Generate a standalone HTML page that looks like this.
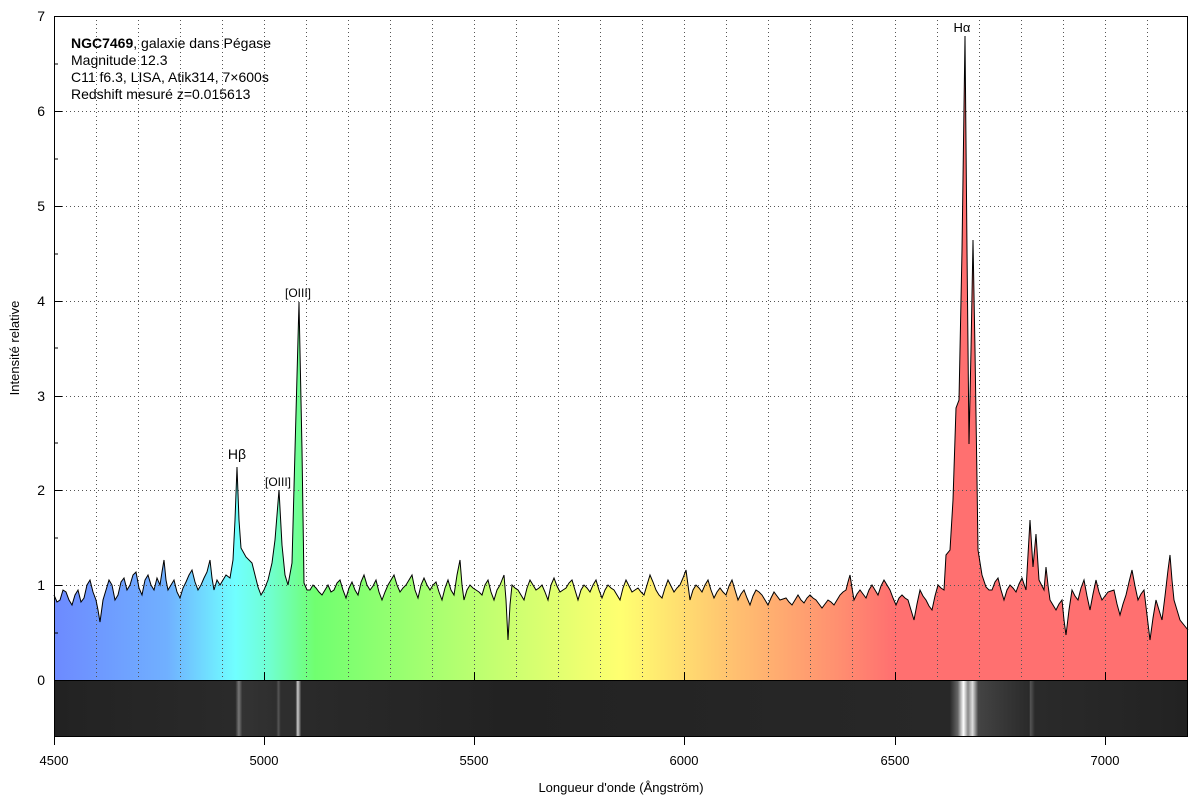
<!DOCTYPE html>
<html><head><meta charset="utf-8"><style>
body{margin:0;background:#fff;}
svg{display:block;font-family:"Liberation Sans",sans-serif;}
</style></head><body>
<svg width="1200" height="800" viewBox="0 0 1200 800">
<defs>
<linearGradient id="sp" x1="54" y1="0" x2="1188" y2="0" gradientUnits="userSpaceOnUse">
<stop offset="0" stop-color="#6d8aff"/>
<stop offset="0.1" stop-color="#70b0ff"/>
<stop offset="0.16" stop-color="#70ffff"/>
<stop offset="0.19" stop-color="#70ffd0"/>
<stop offset="0.23" stop-color="#70ff70"/>
<stop offset="0.5" stop-color="#ffff70"/>
<stop offset="0.6" stop-color="#ffc070"/>
<stop offset="0.69" stop-color="#ff9070"/>
<stop offset="0.74" stop-color="#ff7070"/>
<stop offset="1" stop-color="#ff7070"/>
</linearGradient>
<linearGradient id="st" x1="54" y1="0" x2="1188" y2="0" gradientUnits="userSpaceOnUse">
<stop offset="0" stop-color="#222"/>
<stop offset="0.160" stop-color="#2a2a2a"/>
<stop offset="0.163" stop-color="#777"/>
<stop offset="0.166" stop-color="#333"/>
<stop offset="0.196" stop-color="#2e2e2e"/>
<stop offset="0.198" stop-color="#555"/>
<stop offset="0.200" stop-color="#2e2e2e"/>
<stop offset="0.213" stop-color="#2e2e2e"/>
<stop offset="0.215" stop-color="#ccc"/>
<stop offset="0.218" stop-color="#2a2a2a"/>
<stop offset="0.40" stop-color="#222"/>
<stop offset="0.79" stop-color="#282828"/>
<stop offset="0.797" stop-color="#666"/>
<stop offset="0.802" stop-color="#fff"/>
<stop offset="0.806" stop-color="#888"/>
<stop offset="0.810" stop-color="#ddd"/>
<stop offset="0.815" stop-color="#444"/>
<stop offset="0.86" stop-color="#2a2a2a"/>
<stop offset="0.861" stop-color="#555"/>
<stop offset="0.865" stop-color="#2a2a2a"/>
<stop offset="1" stop-color="#222"/>
</linearGradient>
</defs>
<rect x="54" y="680" width="1134" height="57" fill="url(#st)"/>
<polygon fill="url(#sp)" points="54,680 54,595 57,602 60,600 63,590 66,592 69,600 72,605 75,595 78,590 81,602 84,598 87,585 90,580 93,592 96,600 98,610 100,622 103,600 106,590 109,580 112,585 115,600 118,595 121,582 124,578 127,590 130,585 133,575 136,572 139,588 142,595 145,580 148,575 151,585 154,590 157,578 160,585 162,572 164,560 166,580 168,590 171,585 174,580 177,592 180,598 183,588 186,582 189,575 192,570 195,582 198,590 201,585 204,578 207,572 210,560 212,578 214,590 217,580 220,585 223,580 226,575 230,578 233,560 235,520 237,467 239,520 241,548 246,557 252,563 255,575 258,587 261,595 264,590 268,580 272,563 275,540 279,490 282,545 285,575 288,585 292,563 295,450 299,302 302,450 304,583 307,590 310,590 313,585 316,588 319,592 322,595 325,590 328,585 331,592 334,590 337,583 340,580 343,590 346,598 349,588 352,582 355,590 358,595 361,582 364,575 367,585 370,590 373,586 376,580 379,592 382,600 385,592 388,585 391,580 394,575 397,585 400,592 403,588 406,585 409,580 412,575 415,590 418,598 421,585 424,578 427,585 430,590 433,585 436,582 439,592 442,600 445,588 448,580 451,590 454,595 457,575 460,560 462,585 464,600 467,590 470,585 473,588 476,590 479,592 482,595 485,585 488,580 491,592 494,600 497,590 500,585 502,580 504,575 506,600 508,640 510,605 512,585 515,588 518,590 521,595 524,600 527,588 530,580 533,585 536,590 539,588 542,585 545,592 548,600 551,585 554,578 557,586 560,592 563,590 566,588 569,583 572,580 575,590 578,600 581,590 584,585 587,588 590,592 593,585 596,580 599,590 602,598 605,590 608,585 611,588 614,590 617,595 620,600 623,588 626,580 629,586 632,592 635,590 638,588 641,592 644,595 647,585 650,575 653,582 656,590 659,595 662,598 665,588 668,580 671,586 674,592 677,588 680,585 683,578 686,570 688,585 690,600 693,590 696,585 699,588 702,592 705,585 708,580 711,590 714,598 717,592 720,588 723,592 726,595 729,586 732,580 735,590 738,600 741,594 744,590 747,598 750,605 753,596 756,590 759,592 762,595 765,600 768,605 771,598 774,592 777,596 780,600 783,599 786,598 789,602 792,605 795,600 798,595 801,600 804,603 807,598 810,595 813,598 816,600 819,604 822,608 825,604 828,600 831,602 834,605 837,600 840,595 843,592 846,590 848,582 850,575 852,588 854,600 857,594 860,590 863,594 866,598 869,590 872,585 875,590 878,595 881,586 884,580 887,585 890,590 893,598 896,605 899,598 902,595 905,598 908,600 911,610 914,620 917,604 920,590 923,596 926,600 929,606 932,610 935,596 938,585 941,588 944,590 946,555 950,550 953,500 956,408 959,400 962,250 965,36 967,250 969,444 971,350 973,240 975,350 977,480 978,550 982,575 986,587 989,590 992,590 995,582 998,578 1001,590 1004,600 1007,590 1010,585 1013,588 1016,592 1019,584 1022,578 1026,590 1030,520 1033,567 1036,534 1039,580 1044,590 1046,567 1048,585 1050,600 1053,605 1056,610 1059,604 1062,600 1064,620 1066,635 1069,610 1072,590 1075,596 1078,600 1081,588 1084,580 1087,596 1090,610 1093,594 1096,580 1099,592 1102,600 1105,596 1108,592 1111,591 1114,590 1117,604 1120,615 1123,604 1126,595 1129,582 1132,570 1135,586 1138,600 1141,594 1144,590 1147,615 1150,640 1153,618 1156,600 1159,610 1162,620 1165,596 1168,570 1170,555 1172,580 1174,600 1177,610 1180,620 1184,625 1188,630 1188,680"/>
<g stroke="#555" stroke-width="1" stroke-dasharray="1,3" fill="none">
<path d="M54 585.5H1188M54 490.5H1188M54 396.5H1188M54 301.5H1188M54 206.5H1188M54 111.5H1188"/>
<path d="M96.5 16V680M138.5 16V680M180.5 16V680M222.5 16V680M264.5 16V680M306.5 16V680M348.5 16V680M390.5 16V680M432.5 16V680M474.5 16V680M516.5 16V680M558.5 16V680M600.5 16V680M642.5 16V680M684.5 16V680M726.5 16V680M768.5 16V680M810.5 16V680M852.5 16V680M895.5 16V680M937.5 16V680M979.5 16V680M1021.5 16V680M1063.5 16V680M1105.5 16V680M1147.5 16V680"/>
</g>
<polyline fill="none" stroke="#000" stroke-width="1" points="54,595 57,602 60,600 63,590 66,592 69,600 72,605 75,595 78,590 81,602 84,598 87,585 90,580 93,592 96,600 98,610 100,622 103,600 106,590 109,580 112,585 115,600 118,595 121,582 124,578 127,590 130,585 133,575 136,572 139,588 142,595 145,580 148,575 151,585 154,590 157,578 160,585 162,572 164,560 166,580 168,590 171,585 174,580 177,592 180,598 183,588 186,582 189,575 192,570 195,582 198,590 201,585 204,578 207,572 210,560 212,578 214,590 217,580 220,585 223,580 226,575 230,578 233,560 235,520 237,467 239,520 241,548 246,557 252,563 255,575 258,587 261,595 264,590 268,580 272,563 275,540 279,490 282,545 285,575 288,585 292,563 295,450 299,302 302,450 304,583 307,590 310,590 313,585 316,588 319,592 322,595 325,590 328,585 331,592 334,590 337,583 340,580 343,590 346,598 349,588 352,582 355,590 358,595 361,582 364,575 367,585 370,590 373,586 376,580 379,592 382,600 385,592 388,585 391,580 394,575 397,585 400,592 403,588 406,585 409,580 412,575 415,590 418,598 421,585 424,578 427,585 430,590 433,585 436,582 439,592 442,600 445,588 448,580 451,590 454,595 457,575 460,560 462,585 464,600 467,590 470,585 473,588 476,590 479,592 482,595 485,585 488,580 491,592 494,600 497,590 500,585 502,580 504,575 506,600 508,640 510,605 512,585 515,588 518,590 521,595 524,600 527,588 530,580 533,585 536,590 539,588 542,585 545,592 548,600 551,585 554,578 557,586 560,592 563,590 566,588 569,583 572,580 575,590 578,600 581,590 584,585 587,588 590,592 593,585 596,580 599,590 602,598 605,590 608,585 611,588 614,590 617,595 620,600 623,588 626,580 629,586 632,592 635,590 638,588 641,592 644,595 647,585 650,575 653,582 656,590 659,595 662,598 665,588 668,580 671,586 674,592 677,588 680,585 683,578 686,570 688,585 690,600 693,590 696,585 699,588 702,592 705,585 708,580 711,590 714,598 717,592 720,588 723,592 726,595 729,586 732,580 735,590 738,600 741,594 744,590 747,598 750,605 753,596 756,590 759,592 762,595 765,600 768,605 771,598 774,592 777,596 780,600 783,599 786,598 789,602 792,605 795,600 798,595 801,600 804,603 807,598 810,595 813,598 816,600 819,604 822,608 825,604 828,600 831,602 834,605 837,600 840,595 843,592 846,590 848,582 850,575 852,588 854,600 857,594 860,590 863,594 866,598 869,590 872,585 875,590 878,595 881,586 884,580 887,585 890,590 893,598 896,605 899,598 902,595 905,598 908,600 911,610 914,620 917,604 920,590 923,596 926,600 929,606 932,610 935,596 938,585 941,588 944,590 946,555 950,550 953,500 956,408 959,400 962,250 965,36 967,250 969,444 971,350 973,240 975,350 977,480 978,550 982,575 986,587 989,590 992,590 995,582 998,578 1001,590 1004,600 1007,590 1010,585 1013,588 1016,592 1019,584 1022,578 1026,590 1030,520 1033,567 1036,534 1039,580 1044,590 1046,567 1048,585 1050,600 1053,605 1056,610 1059,604 1062,600 1064,620 1066,635 1069,610 1072,590 1075,596 1078,600 1081,588 1084,580 1087,596 1090,610 1093,594 1096,580 1099,592 1102,600 1105,596 1108,592 1111,591 1114,590 1117,604 1120,615 1123,604 1126,595 1129,582 1132,570 1135,586 1138,600 1141,594 1144,590 1147,615 1150,640 1153,618 1156,600 1159,610 1162,620 1165,596 1168,570 1170,555 1172,580 1174,600 1177,610 1180,620 1184,625 1188,630"/>
<g stroke="#000" stroke-width="1" fill="none">
<rect x="54.5" y="16.5" width="1133" height="720"/>
<path d="M54 680.5H1188"/>
<path d="M54 585.5h8M54 490.5h8M54 396.5h8M54 301.5h8M54 206.5h8M54 111.5h8"/>
<path d="M54 633h4M54 538h4M54 443h4M54 348h4M54 254h4M54 159h4M54 64h4"/>
<path d="M264.5 680v-8M474.5 680v-8M684.5 680v-8M895.5 680v-8M1105.5 680v-8"/>
<path d="M54.5 737v8M264.5 737v8M474.5 737v8M684.5 737v8M895.5 737v8M1105.5 737v8"/>
</g>
<g font-size="14" text-anchor="end" fill="#000">
<text x="45" y="21">7</text><text x="45" y="116">6</text><text x="45" y="211">5</text>
<text x="45" y="306">4</text><text x="45" y="401">3</text><text x="45" y="495">2</text>
<text x="45" y="590">1</text><text x="45" y="685">0</text>
</g>
<g font-size="13" text-anchor="middle" fill="#000">
<text x="54" y="765">4500</text><text x="264" y="765">5000</text><text x="474" y="765">5500</text>
<text x="684" y="765">6000</text><text x="895" y="765">6500</text><text x="1105" y="765">7000</text>
<text x="621" y="792">Longueur d'onde (Ångström)</text>
<text transform="translate(19,348) rotate(-90)">Intensité relative</text>
<text x="237" y="459" font-size="14">Hβ</text>
<text x="278" y="486" font-size="12">[OIII]</text>
<text x="298" y="297" font-size="12">[OIII]</text>
<text x="962" y="32" font-size="13">Hα</text>
</g>
<g font-size="14" fill="#000">
<text x="71" y="48"><tspan font-weight="bold">NGC7469</tspan>, galaxie dans Pégase</text>
<text x="71" y="65">Magnitude 12.3</text>
<text x="71" y="82">C11 f6.3, LISA, Atik314, 7×600s</text>
<text x="71" y="99">Redshift mesuré z=0.015613</text>
</g>
</svg>
</body></html>
